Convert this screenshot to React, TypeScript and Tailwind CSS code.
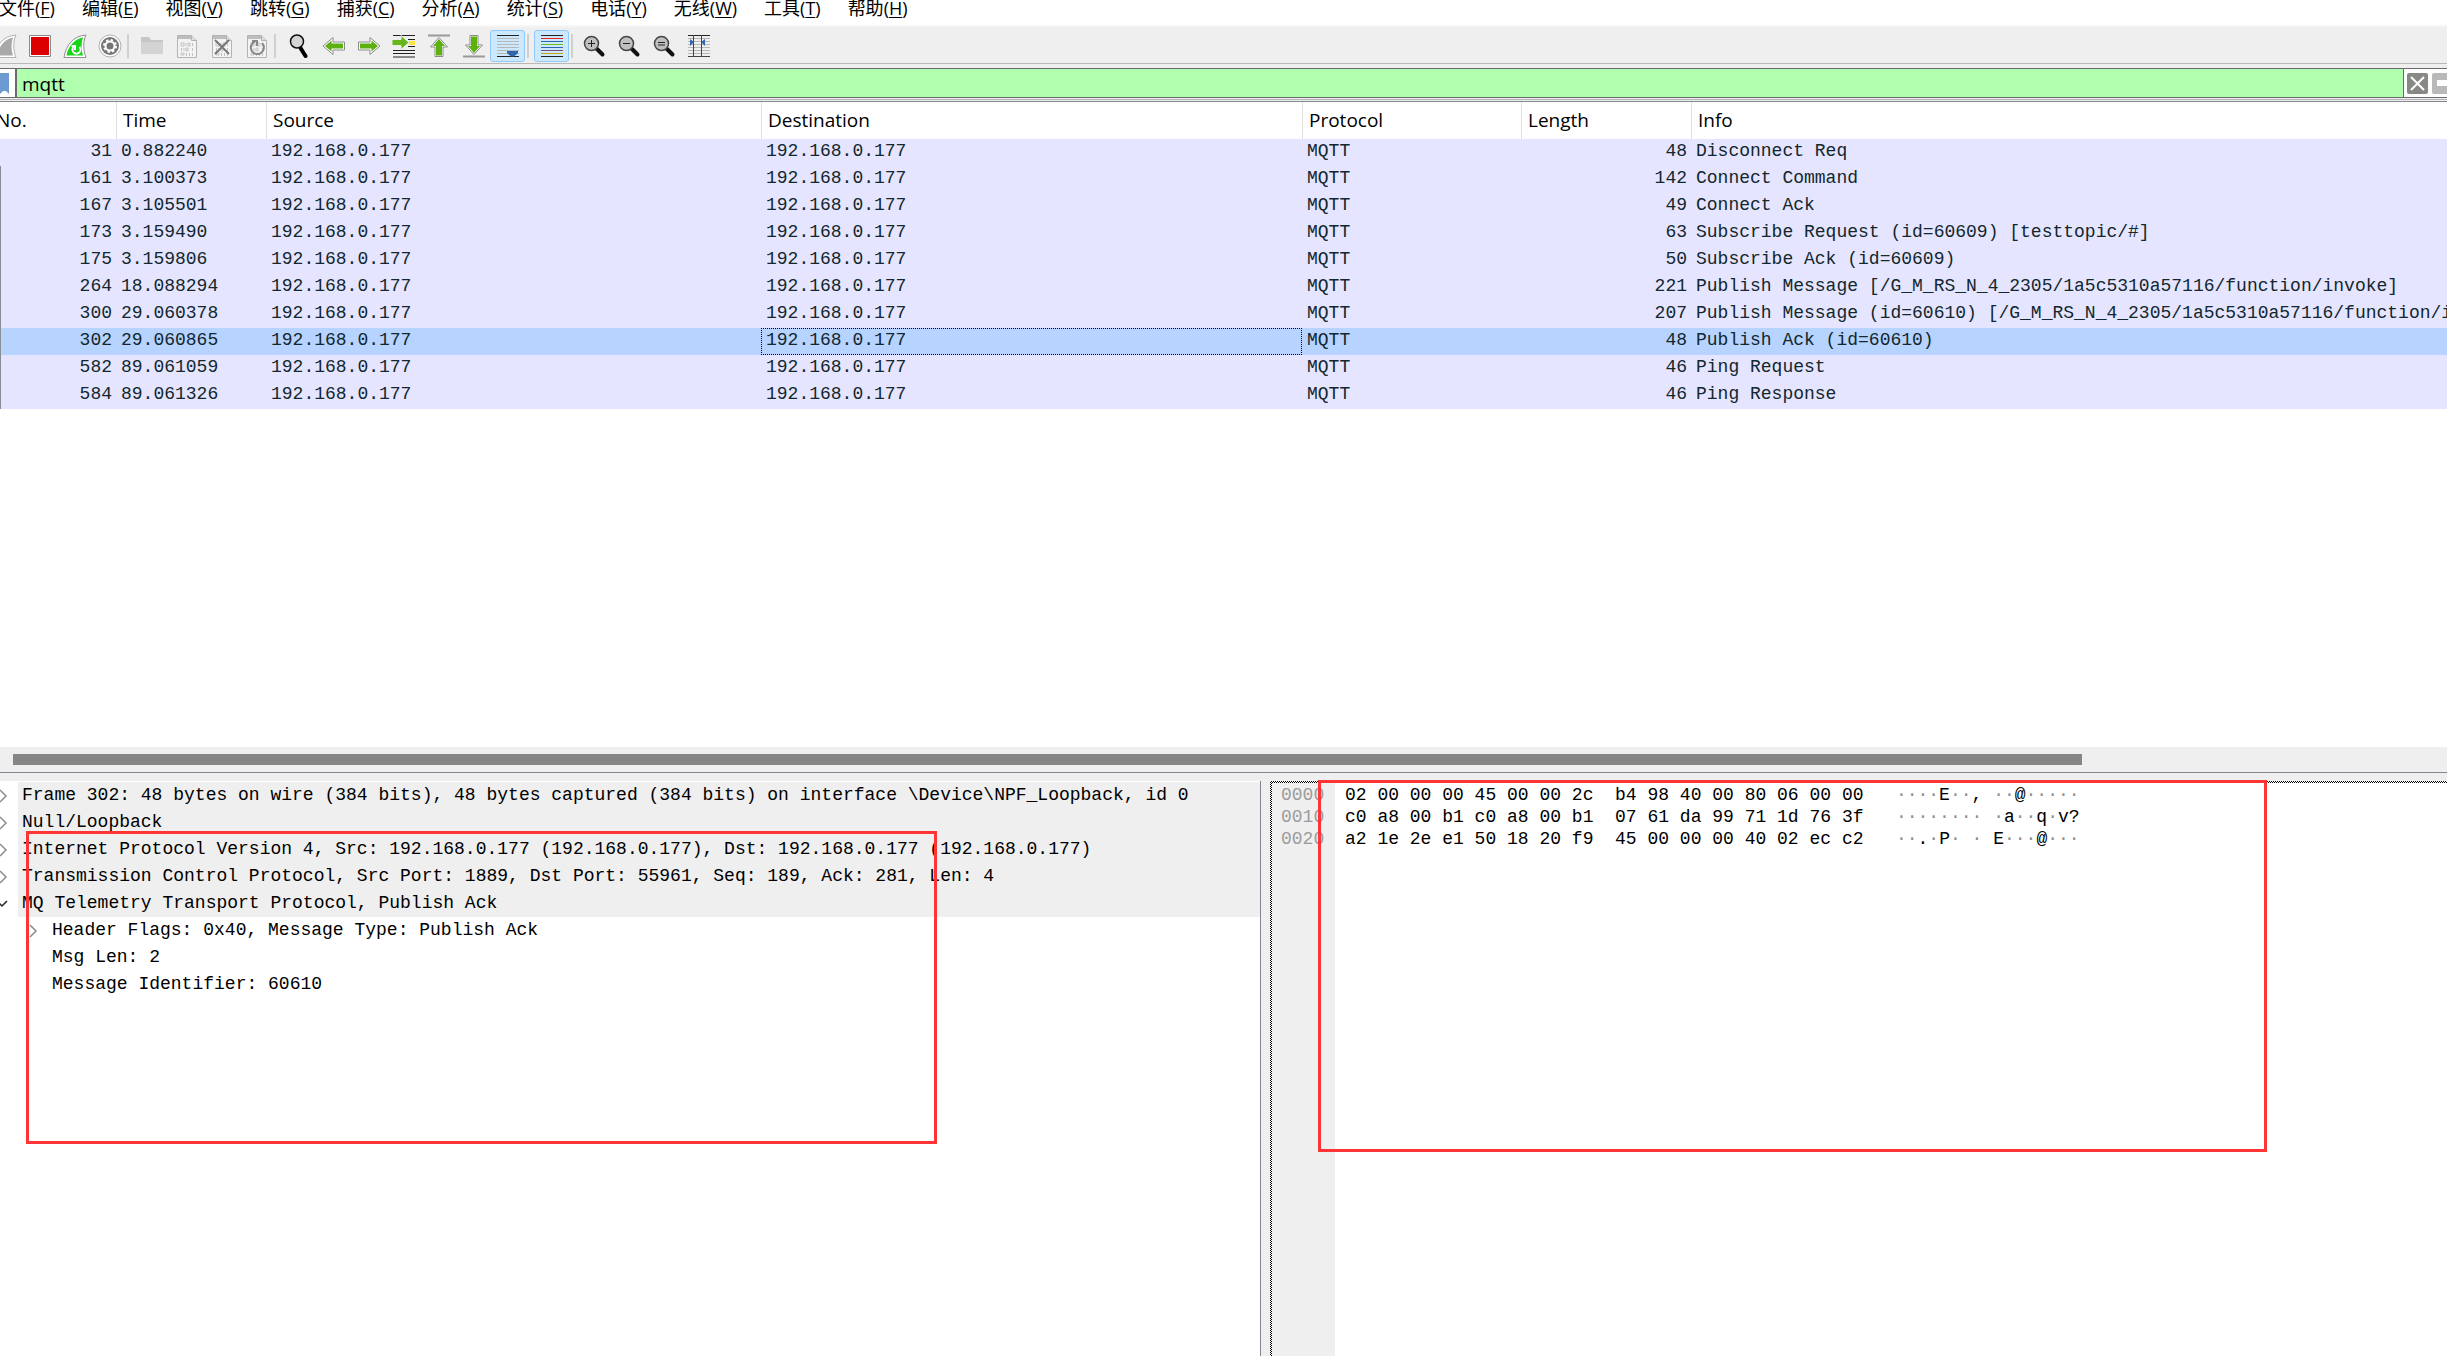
import type { ReactNode } from "react";

const MONO = "font-['Liberation_Mono',monospace] text-[18px]";

const menus: [string, string][] = [
  ["文件", "F"],
  ["编辑", "E"],
  ["视图", "V"],
  ["跳转", "G"],
  ["捕获", "C"],
  ["分析", "A"],
  ["统计", "S"],
  ["电话", "Y"],
  ["无线", "W"],
  ["工具", "T"],
  ["帮助", "H"],
];

const packets: string[][] = [
  ["31", "0.882240", "48", "Disconnect Req"],
  ["161", "3.100373", "142", "Connect Command"],
  ["167", "3.105501", "49", "Connect Ack"],
  ["173", "3.159490", "63", "Subscribe Request (id=60609) [testtopic/#]"],
  ["175", "3.159806", "50", "Subscribe Ack (id=60609)"],
  ["264", "18.088294", "221", "Publish Message [/G_M_RS_N_4_2305/1a5c5310a57116/function/invoke]"],
  ["300", "29.060378", "207", "Publish Message (id=60610) [/G_M_RS_N_4_2305/1a5c5310a57116/function/invoke]"],
  ["302", "29.060865", "48", "Publish Ack (id=60610)"],
  ["582", "89.061059", "46", "Ping Request"],
  ["584", "89.061326", "46", "Ping Response"],
];

const layers = [
  "Frame 302: 48 bytes on wire (384 bits), 48 bytes captured (384 bits) on interface \\Device\\NPF_Loopback, id 0",
  "Null/Loopback",
  "Internet Protocol Version 4, Src: 192.168.0.177 (192.168.0.177), Dst: 192.168.0.177 (192.168.0.177)",
  "Transmission Control Protocol, Src Port: 1889, Dst Port: 55961, Seq: 189, Ack: 281, Len: 4",
  "MQ Telemetry Transport Protocol, Publish Ack",
];

const fields = [
  "Header Flags: 0x40, Message Type: Publish Ack",
  "Msg Len: 2",
  "Message Identifier: 60610",
];

const bytes = [
  ["0000", "02 00 00 00 45 00 00 2c  b4 98 40 00 80 06 00 00", "····E··, ··@·····"],
  ["0010", "c0 a8 00 b1 c0 a8 00 b1  07 61 da 99 71 1d 76 3f", "········ ·a··q·v?"],
  ["0020", "a2 1e 2e e1 50 18 20 f9  45 00 00 00 40 02 ec c2", "··.·P· · E···@···"],
];

function Icon({ children }: { children: ReactNode }) {
  return (
    <svg viewBox="0 0 24 24" className="size-6 shrink-0" fill="none" aria-hidden="true">
      {children}
    </svg>
  );
}

function Tool({ label, children }: { label: string; children: ReactNode }) {
  return (
    <button type="button" aria-label={label} className="flex h-8 w-[35px] shrink-0 items-center justify-center">
      <Icon>{children}</Icon>
    </button>
  );
}

function Toggle({ label, children }: { label: string; children: ReactNode }) {
  return (
    <button
      type="button"
      aria-label={label}
      aria-pressed="true"
      className="flex h-8 w-[35px] shrink-0 items-center justify-center rounded-[3px] border border-[#90c8f6] bg-[#cce8ff]"
    >
      <Icon>{children}</Icon>
    </button>
  );
}

function Divider() {
  return <span className="h-6 w-0.5 shrink-0 bg-[#d0d0d0]" />;
}

function Sheet() {
  return (
    <>
      <path d="M2.5 1.5h14l5 5v17h-19z" fill="#f3f3f3" stroke="#b4b4b4" />
      <path d="M3 2h13v3H3z" fill="#bdbdbd" />
      <path d="M16.500 1.500v5h5" fill="#dedede" stroke="#b4b4b4" />
      <path
        d="M6 9h3v3H6zM11 9v3M13 9h2v3h-2zM17.500 9v3M6.500 14v3M9 14v3M11 14h2v3h-2zM17.500 14v3M6 19h3v2H6zM11.500 19v3M14.500 19v3M17.500 19v3"
        stroke="#c2c2c2"
      />
    </>
  );
}

function Lens({ children }: { children?: ReactNode }) {
  return (
    <>
      <path d="m15 15 5.500 5.500" stroke="#111" strokeWidth="4" strokeLinecap="round" />
      <circle cx="9.500" cy="9.500" r="7" fill="#bfbfbf" stroke="#444" strokeWidth="1.500" />
      {children}
    </>
  );
}

function Arrow({ turn = "" }: { turn?: string }) {
  return (
    <g transform={turn}>
      <path d="M1 12 11 3.500V8h11.500v8H11v4.500z" fill="#fff" stroke="#8b8b8b" strokeLinejoin="round" />
      <path d="m3 12 6.500-5.500v3H21v5H9.500v3z" fill="#5cb010" />
    </g>
  );
}

function Lines({ colors }: { colors: string[] }) {
  return (
    <>
      {colors.map((c, i) => (
        <path key={i} d={`M1 ${1.5 + i * 3}h22`} stroke={c} />
      ))}
    </>
  );
}

function MenuBar() {
  return (
    <nav className="flex h-[25px] shrink-0 items-start gap-7 overflow-hidden bg-white text-[18px] leading-4">
      {menus.map(([name, key]) => (
        <button key={key} type="button" className="-ml-px shrink-0 whitespace-nowrap">
          {name}(<span className="underline underline-offset-2">{key}</span>)
        </button>
      ))}
    </nav>
  );
}

function ToolBar() {
  return (
    <div role="toolbar" className="flex h-[39px] shrink-0 items-center border-t-2 border-b border-t-[#f6f6f6] border-b-[#b9b9b9] bg-[#efefef] pt-0.5">
      <div className="-ml-[13px] flex">
        <Tool label="Start capture">
          <path d="M1 23.500C3 11 10 2 23 1c-3 6-3 15 0 22.500z" fill="#fff" stroke="#b2b2b2" />
          <path d="M4 21.500C6 12 12 5 20 3.500c-2 6-2 12 0 18z" fill="#a9a9a9" />
        </Tool>
        <Tool label="Stop capture">
          <path d="M1.500 1.500h21v21h-21z" fill="#fff" stroke="#8a8a8a" />
          <path d="M3 3h18v18H3z" fill="#dc0000" />
        </Tool>
        <Tool label="Restart capture">
          <path d="M1 23.500C3 11 10 2 23 1c-3 6-3 15 0 22.500z" fill="#fff" stroke="#8f8f8f" />
          <path d="M3.500 21.500C5 12 12 5 20 3.500c-2 6-2 12 0 18z" fill="#19d519" />
          <path d="M16.500 13a4 4 0 1 1-6 0M8.500 12h3.500v4" stroke="#fff" strokeWidth="2" />
        </Tool>
        <Tool label="Capture options">
          <circle cx="12" cy="12" r="11" fill="#fff" stroke="#b0b0b0" />
          <circle cx="12" cy="12" r="9" fill="#777" />
          <circle cx="12" cy="12" r="4.500" stroke="#fff" strokeWidth="2" />
          <circle cx="12" cy="12" r="6" stroke="#fff" strokeWidth="2" strokeDasharray="2.350 2.360" />
          <circle cx="12" cy="12" r="3" fill="#777" />
        </Tool>
      </div>
      <Divider />
      <div className="ml-[5px] flex">
        <Tool label="Open">
          <path d="M1 3h8l2 3h12v14H1z" fill="#c6c6c6" />
          <path d="M1 8h22v12H1z" fill="#d3d3d3" />
        </Tool>
        <Tool label="Save">
          <Sheet />
        </Tool>
        <Tool label="Close">
          <Sheet />
          <path d="m5 6 14 14M19 6 5 20" stroke="#777" strokeWidth="2" />
        </Tool>
        <Tool label="Reload">
          <Sheet />
          <path d="M17 9a6.500 6.500 0 1 1-7-1.500M7 7h5v5" stroke="#888" strokeWidth="2" />
        </Tool>
      </div>
      <Divider />
      <div className="ml-[5px] flex">
        <Tool label="Find packet">
          <path d="m13.500 14 5 8" stroke="#000" strokeWidth="4" strokeLinecap="round" />
          <circle cx="10" cy="7.500" r="6.500" fill="#d4d4d4" stroke="#111" strokeWidth="1.500" />
        </Tool>
        <Tool label="Previous packet">
          <Arrow />
        </Tool>
        <Tool label="Next packet">
          <Arrow turn="rotate(180 12 12)" />
        </Tool>
        <Tool label="Go to packet">
          <path d="M1 1.500h22M16 5.500h7M16 12.500h7M1 16.500h22M1 19.500h22M1 23h22" stroke="#222" />
          <path d="M17 7h6v4h-6z" fill="#ffe345" />
          <path d="M0 5.500h9V1.500l8 7-8 7v-4H0z" fill="#65b51b" stroke="#e9efe4" />
        </Tool>
        <Tool label="First packet">
          <path d="M1 1.500h22" stroke="#999" strokeWidth="2" />
          <path d="M12 3.500 20.500 13H16v9.500H8V13H3.500z" fill="#fff" stroke="#8b8b8b" />
          <path d="m12 5 6 7h-3v9.500H9V12H6z" fill="#5cb010" />
        </Tool>
        <Tool label="Last packet">
          <path d="M1 22.500h22" stroke="#999" strokeWidth="2" />
          <path d="M12 20.500 20.500 11H16V1.500H8V11H3.500z" fill="#fff" stroke="#8b8b8b" />
          <path d="m12 19 6-7h-3V2.500H9V12H6z" fill="#5cb010" />
        </Tool>
      </div>
      <div className="-ml-px flex">
        <Toggle label="Auto scroll">
          <Lines colors={["#222", "#b7b7b7", "#b7b7b7", "#b7b7b7", "#b7b7b7", "#b7b7b7", "#b7b7b7"]} />
          <path d="M1 22.500h22" stroke="#222" />
          <path d="M11 17h11v2l-4 3.500h-3L11 19z" fill="#2f66ad" />
        </Toggle>
      </div>
      <span className="ml-0.5 h-6 w-0.5 shrink-0 bg-[#d0d0d0]" />
      <div className="ml-[5px] flex">
        <Toggle label="Colorize">
          <Lines colors={["#222", "#e8271b", "#2f66ad", "#6fbf1a", "#2f66ad", "#75507b", "#c9a00b"]} />
          <path d="M1 22.500h22" stroke="#222" />
        </Toggle>
      </div>
      <span className="ml-0.5 h-6 w-0.5 shrink-0 bg-[#d0d0d0]" />
      <div className="ml-[3px] flex">
        <Tool label="Zoom in">
          <Lens>
            <path d="M6 9.500h7M9.500 6v7" stroke="#222" />
          </Lens>
        </Tool>
        <Tool label="Zoom out">
          <Lens>
            <path d="M6 9.500h7" stroke="#222" />
          </Lens>
        </Tool>
        <Tool label="Normal size">
          <Lens>
            <path d="M6 8.500h7M6 11h7" stroke="#222" />
          </Lens>
        </Tool>
        <Tool label="Resize columns">
          <Lines colors={["#222", "#b7b7b7", "#b7b7b7", "#b7b7b7", "#b7b7b7", "#b7b7b7", "#b7b7b7"]} />
          <path d="M1 22.500h22M6.500 1v22M14.500 1v22" stroke="#444" />
          <path d="M3 5l4 3-4 4zM18 5l-4 3 4 4z" fill="#2f66ad" />
        </Tool>
      </div>
    </div>
  );
}

function FilterBar() {
  return (
    <div className="mt-1 shrink-0 border-b border-[#b4b4b8] pb-px">
      <div className="flex h-[30px] border-y border-[#6b6b6b] bg-white">
        <button type="button" aria-label="Bookmarks" className="w-[15px] shrink-0">
          <svg viewBox="0 0 15 28" className="h-7 w-[15px]" aria-hidden="true">
            <path d="M0 4h9v21l-3-3H3l-3 3z" fill="#6c9bd2" />
          </svg>
        </button>
        <input
          aria-label="Display filter"
          defaultValue="mqtt"
          className="min-w-0 flex-1 border-x border-l-2 border-[#6b6b6b] bg-[#afffaf] pt-px pl-[5px] text-[19px] leading-7 outline-none"
        />
        <div className="flex w-[43px] shrink-0 items-start gap-1 overflow-hidden pt-1 pl-[3px]">
          <button type="button" aria-label="Clear filter" className="shrink-0">
            <svg viewBox="0 0 21 21" className="size-[21px]" aria-hidden="true">
              <rect width="21" height="21" rx="2" fill="#878a84" />
              <path d="m4 4 13 13M17 4 4 17" stroke="#fff" strokeWidth="2" />
            </svg>
          </button>
          <button type="button" aria-label="Apply filter" className="shrink-0">
            <svg viewBox="0 0 21 21" className="size-[21px]" aria-hidden="true">
              <rect width="21" height="21" rx="2" fill="#b9b9b9" />
              <path d="M5 7h16v6H5z" fill="#fff" />
            </svg>
          </button>
        </div>
      </div>
    </div>
  );
}

function PacketList() {
  const head = "border-l border-[#e0e0e0] pb-0.5 pl-1.5 text-left font-normal";
  const cell = "pb-0.5 pl-[5px]";
  return (
    <div className="min-h-0 flex-1 overflow-hidden bg-white">
      <table className="w-full table-fixed border-separate border-spacing-0 whitespace-nowrap">
        <colgroup>
          <col className="w-[116px]" />
          <col className="w-[150px]" />
          <col className="w-[495px]" />
          <col className="w-[541px]" />
          <col className="w-[219px]" />
          <col className="w-[170px]" />
          <col />
        </colgroup>
        <thead>
          <tr className="h-[37px] text-[19px] leading-6">
            <th className="pb-0.5 text-left font-normal">
              <span className="-ml-1">No.</span>
            </th>
            <th className={head}>Time</th>
            <th className={head}>Source</th>
            <th className={head}>Destination</th>
            <th className={head}>Protocol</th>
            <th className={head}>Length</th>
            <th className={head}>Info</th>
          </tr>
        </thead>
        <tbody className={`${MONO} leading-[25px] text-[#12272e]`}>
          {packets.map(([no, time, len, info], i) => {
            const on = no === "302";
            return (
              <tr key={no} className={on ? "h-[27px] bg-[#b7d3ff]" : "h-[27px] bg-[#e5e5ff]"}>
                <td className={i ? "border-l border-[#8a8f96] pr-1 pb-0.5 text-right" : "pr-1 pb-0.5 text-right"}>{no}</td>
                <td className={cell}>{time}</td>
                <td className={cell}>192.168.0.177</td>
                <td className={on ? "pb-0.5 pl-[5px] outline-1 -outline-offset-1 outline-dotted outline-black" : cell}>
                  192.168.0.177
                </td>
                <td className={cell}>MQTT</td>
                <td className="pr-1 pb-0.5 text-right">{len}</td>
                <td className="overflow-hidden pb-0.5 pl-[5px]">{info}</td>
              </tr>
            );
          })}
        </tbody>
      </table>
    </div>
  );
}

function Chevron({ open = false }: { open?: boolean }) {
  return (
    <svg viewBox="0 0 10 14" className="h-3.5 w-2.5 shrink-0" fill="none" aria-hidden="true">
      {open ? <path d="m0 5 4 4 5-5" stroke="#222" strokeWidth="1.500" /> : <path d="m2 1 6 6-6 6" stroke="#8c8c8c" strokeWidth="1.500" />}
    </svg>
  );
}

function Details() {
  return (
    <section className="relative w-[1261px] shrink-0 border-r border-[#83868f] bg-white">
      <ul className={`${MONO} pt-px leading-[27px] whitespace-nowrap`}>
        {layers.map((text, i) => (
          <li key={text} className="flex h-[27px] items-center">
            <button type="button" aria-label="Toggle layer" className="-ml-1 flex w-[22px] shrink-0 pl-0.5">
              <Chevron open={i === 4} />
            </button>
            <span className="h-full flex-1 bg-[#efefef] pl-1">{text}</span>
          </li>
        ))}
        {fields.map((text, i) => (
          <li key={text} className="flex h-[27px] items-center pl-7">
            <span className="flex w-6 shrink-0">{i === 0 && <Chevron />}</span>
            <span className="h-full">{text}</span>
          </li>
        ))}
      </ul>
      <div className="pointer-events-none absolute top-[50px] left-[26px] h-[313px] w-[911px] border-3 border-[#ff3535]" />
    </section>
  );
}

function Ascii({ text }: { text: string }) {
  return (
    <>
      {text.split(/(·+)/).map((part, i) =>
        part.startsWith("·") ? (
          <span key={i} className="text-[#8f8f8f]">
            {part}
          </span>
        ) : (
          part
        ),
      )}
    </>
  );
}

function Bytes() {
  return (
    <section className="relative ml-[9px] min-w-0 flex-1 bg-[repeating-conic-gradient(#000_0_25%,#fff_0_50%)] bg-[length:2px_2px] pt-0.5 pl-0.5">
      <div className={`${MONO} flex h-full bg-white leading-[22px] whitespace-pre`}>
        <div className="w-[63px] shrink-0 bg-[#efefef] pt-px pl-[9px] text-[#9c9c9c]">
          {bytes.map(([offset]) => (
            <div key={offset}>{offset}</div>
          ))}
        </div>
        <div className="pt-px pl-2.5">
          {bytes.map(([offset, hex, ascii]) => (
            <div key={offset}>
              {hex + "   "}
              <Ascii text={ascii} />
            </div>
          ))}
        </div>
      </div>
      <div className="pointer-events-none absolute -top-px left-12 h-[372px] w-[949px] border-3 border-[#ff3535]" />
    </section>
  );
}

export default function App() {
  return (
    <div className="flex h-screen flex-col overflow-hidden bg-[#efefef] font-['Open_Sans','Noto_Sans_CJK_SC',sans-serif] text-black">
      <MenuBar />
      <ToolBar />
      <FilterBar />
      <div className="mt-px flex min-h-0 flex-1 basis-0 flex-col border-y border-[#83868f]">
        <PacketList />
        <div className="h-[25px] shrink-0 py-[7px] pl-[13px]">
          <div className="h-[11px] w-[85%] bg-[#858585]" />
        </div>
      </div>
      <div className="mt-2 flex h-[575px] shrink-0">
        <Details />
        <Bytes />
      </div>
    </div>
  );
}
